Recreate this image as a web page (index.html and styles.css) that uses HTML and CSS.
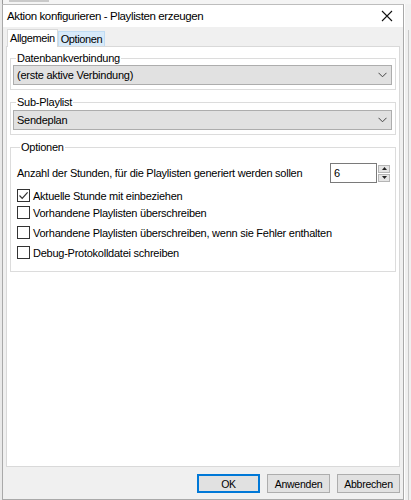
FILE: index.html
```html
<!DOCTYPE html>
<html lang="de">
<head>
<meta charset="utf-8">
<title>Aktion konfigurieren - Playlisten erzeugen</title>
<link rel="stylesheet" href="styles.css">
</head>
<body>
<div class="desk">
  <div class="behind-top"><span class="behind-line"></span></div>
  <div class="row">
    <div class="dialog">
      <div class="titlebar">
        <span class="title">Aktion konfigurieren - Playlisten erzeugen</span>
        <svg class="close" width="12" height="12" viewBox="0 0 12 12"><path d="M1 1 L11 11 M11 1 L1 11" stroke="#111" stroke-width="1.1" fill="none"/></svg>
      </div>
      <div class="client">
        <div class="tabs">
          <div class="tab active">Allgemein</div>
          <div class="tab hover">Optionen</div>
        </div>
        <div class="panel">
          <fieldset class="group g1">
            <legend>Datenbankverbindung</legend>
            <div class="combo"><span>(erste aktive Verbindung)</span>
              <svg width="9" height="6" viewBox="0 0 9 6"><path d="M0.5 0.8 L4.5 4.8 L8.5 0.8" stroke="#444" stroke-width="1" fill="none"/></svg>
            </div>
          </fieldset>
          <fieldset class="group g2">
            <legend>Sub-Playlist</legend>
            <div class="combo"><span>Sendeplan</span>
              <svg width="9" height="6" viewBox="0 0 9 6"><path d="M0.5 0.8 L4.5 4.8 L8.5 0.8" stroke="#444" stroke-width="1" fill="none"/></svg>
            </div>
          </fieldset>
          <fieldset class="group g3">
            <legend>Optionen</legend>
            <div class="hours">
              <span>Anzahl der Stunden, für die Playlisten generiert werden sollen</span>
              <div class="spin">
                <div class="spin-field">6</div>
                <div class="spin-btns">
                  <div class="sb"><svg width="5" height="3" viewBox="0 0 5 3"><path d="M0 3 L2.5 0 L5 3 Z" fill="#222"/></svg></div>
                  <div class="sb"><svg width="5" height="3" viewBox="0 0 5 3"><path d="M0 0 L2.5 3 L5 0 Z" fill="#222"/></svg></div>
                </div>
              </div>
            </div>
            <div class="check first"><span class="box"><svg width="11" height="11" viewBox="0 0 11 11"><path d="M1.5 5.5 L4.2 8.3 L9.6 2.3" stroke="#333" stroke-width="1.2" fill="none"/></svg></span>Aktuelle Stunde mit einbeziehen</div>
            <div class="check second"><span class="box"></span>Vorhandene Playlisten überschreiben</div>
            <div class="check"><span class="box"></span>Vorhandene Playlisten überschreiben, wenn sie Fehler enthalten</div>
            <div class="check"><span class="box"></span>Debug-Protokolldatei schreiben</div>
          </fieldset>
        </div>
        <div class="buttons">
          <button class="btn default">OK</button>
          <button class="btn">Anwenden</button>
          <button class="btn">Abbrechen</button>
        </div>
      </div>
    </div>
    <div class="behind-right"></div>
  </div>
</div>
</body>
</html>
```
FILE: styles.css
```css
* { box-sizing: border-box; }
html, body { margin: 0; padding: 0; }
body {
  width: 411px;
  height: 500px;
  overflow: hidden;
  font-family: "Liberation Sans", Arial, sans-serif;
  font-size: 11px;
  letter-spacing: -0.25px;
  color: #000;
  background: #e9e9e9;
}
.desk { width: 411px; height: 500px; display: flex; flex-direction: column; }
.behind-top {
  height: 4px;
  margin-left: 2px;
  background: #f4f4f4;
  border-left: 1px solid #999;
  padding-left: 6px;
  display: flex;
  align-items: flex-start;
}
.behind-line { width: 40px; height: 2px; background: #c9c9c9; }
.row { display: flex; flex: 1; }
.dialog {
  width: 402px;
  margin-left: 2px;
  border: 1px solid #a9a9a9;
  border-top: 1px solid #bdbdbd;
  display: flex;
  flex-direction: column;
  background: #f0f0f0;
}
.behind-right {
  flex: 1;
  background: #f0f0f0;
  border-left: 1px solid #fff;
}
.behind-right::after {
  content: "";
  display: block;
  margin-left: 3px;
  margin-top: 26px;
  height: 470px;
  width: 1px;
  background: #c8c8c8;
}
.titlebar {
  height: 22px;
  background: #fff;
  display: flex;
  align-items: center;
  justify-content: space-between;
  padding: 0 10px 0 4px;
}
.title { font-size: 11.5px; letter-spacing: -0.38px; }
.client { flex: 1; display: flex; flex-direction: column; padding: 2px 3px 0 3px; }
.tabs { display: flex; align-items: flex-end; height: 17px; padding-left: 1px; }
.tab { padding: 0 2px; line-height: 14px; height: 15px; border: 1px solid transparent; letter-spacing: -0.4px; }
.tab.active {
  height: 18px;
  line-height: 16px;
  background: #fff;
  border: 1px solid #d9d9d9;
  border-bottom: none;
  margin-bottom: -1px;
  position: relative;
  z-index: 1;
}
.tab.hover { background: #d8eaf9; border: 1px solid #c0dcf3; border-bottom: none; }
.panel {
  height: 421px;
  background: #fff;
  border: 1px solid #d9d9d9;
  padding: 5px 3px 0 3px;
  display: flex;
  flex-direction: column;
  gap: 6px;
}
.group {
  margin: 0;
  border: 1px solid #dcdcdc;
  padding: 0 3px 4px 2px;
  min-width: 0;
}
.group legend { padding: 0 1px; margin-left: 3px; line-height: 12px; }
.combo {
  height: 20px;
  background: #e1e1e1;
  border: 1px solid #adadad;
  display: flex;
  align-items: center;
  justify-content: space-between;
  padding: 0 4px 0 3px;
  margin-top: 1px;
}
.g2 .combo { margin-top: 2px; }
.g2 { padding-bottom: 4px; }
.g3 { padding: 0 5px 12px 6px; }
.hours { display: flex; justify-content: space-between; align-items: center; margin-top: 10px; height: 20px; }
.spin { display: flex; align-items: center; gap: 1px; }
.spin-field {
  width: 47px;
  height: 20px;
  border: 1px solid #7a7a7a;
  background: #fff;
  padding-left: 3px;
  line-height: 18px;
}
.spin-btns { display: flex; flex-direction: column; gap: 1px; }
.sb {
  width: 12px;
  height: 8px;
  background: #e5e5e5;
  border: 1px solid #b5b5b5;
  display: flex;
  align-items: center;
  justify-content: center;
}
.check { display: flex; align-items: center; height: 13px; margin-top: 7px; }
.check.first { margin-top: 6px; }
.check.second { margin-top: 4px; }
.box {
  width: 13px;
  height: 13px;
  border: 1px solid #333;
  background: #fff;
  margin-right: 3px;
  display: flex;
  align-items: center;
  justify-content: center;
  flex: none;
}
.buttons {
  display: flex;
  justify-content: flex-end;
  gap: 7px;
  padding: 7px 0 0 0;
}
.btn {
  width: 63px;
  height: 19px;
  font-family: "Liberation Sans", Arial, sans-serif;
  font-size: 10.5px;
  letter-spacing: -0.25px;
  background: #e1e1e1;
  border: 1px solid #adadad;
  padding: 0;
  color: #000;
}
.btn.default { border: 2px solid #0078d7; }
```
